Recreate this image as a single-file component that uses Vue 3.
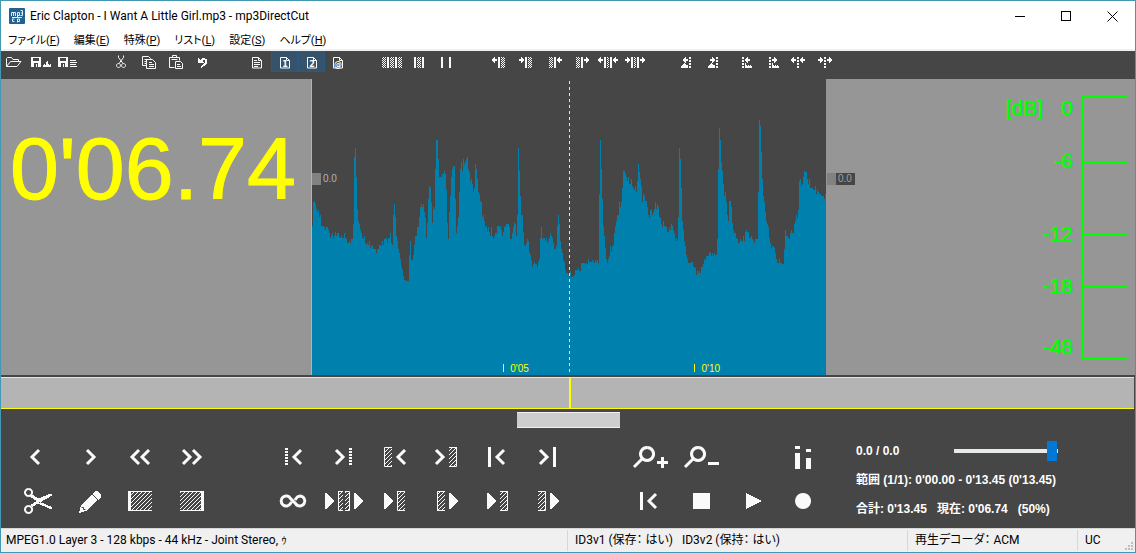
<script setup>
import { ref } from 'vue'

const menus = [
  ['ファイル', 'F'], ['編集', 'E'], ['特殊', 'P'], ['リスト', 'L'], ['設定', 'S'], ['ヘルプ', 'H'],
]

const solid = d => ({ d, kind: 'solid' })
const line = d => ({ d, kind: 'line' })
const thick = d => ({ d, kind: 'thick' })
const hatch = d => ({ d, kind: 'hatch' })

/* toolbar glyph parts, on a 27 x 21 cell */
const arrowL = x => solid(`M${x} 8h1v-1h1v-1h1v2h2v2h-2v2h-1v-1h-1v-1h-1z`)
const arrowR = x => solid(`M${x + 5} 8h-1v-1h-1v-1h-1v2h-2v2h2v2h1v-1h1v-1h1z`)
const bar = x => solid(`M${x} 6h2v11h-2z`)
const check = (x, w = 4) => ({ d: `M${x} 6h${w}v11h-${w}z`, kind: 'check' })
const dots = x => solid(`M${x} 6h2v2h-2zM${x} 9h2v2h-2zM${x} 12h2v2h-2zM${x} 15h2v2h-2z`)
const page = x => line(`M${x + 0.5} 6.5h6l3 3v7.5h-9zM${x + 6.5} 6.5v3h3`)
const disk = solid('M3 6h10v10h-3v-4h-4v4h-3zM5 7v3h6v-3zM8 13h1v3h-1z')
const hillL = solid('M5 17v-2h1v-1h1v-1h1v-1h1v1h1v1h2v3z')
const hillR = solid('M15 17v-5h1v2h1v1h1v-1h1v1h1v-1h1v1h1v2z')

const tools = [
  { name: '開く', parts: [line('M5.5 15.5v-8l1-1h4l1.5 2h5.5v2M5.5 15.5l4-5h10.5l-4 5z')] },
  { name: '選択範囲を保存', parts: [disk, solid('M15 16v-2h1v-1h1v1h1v-3h1v-1h1v3h1v1h1v-1h1v3z')] },
  { name: '分割保存', parts: [disk, line('M15 9.5h6M15 11.5h7M15 13.5h6M15 15.5h7')] },
  null,
  { name: '切り取り', parts: [line('M9.5 4.5v2l4.5 6M14.500 4.500v2l-4.5 6M9.500 12.500a2 2 0 1 0 .1 0M14.500 12.500a2 2 0 1 0 .1 0')] },
  { name: 'コピー', parts: [line('M10.500 14.500h-4v-9h6l2 2v1M8.500 8.500h3M8.500 10.500h2M8.500 12.500h2M10.500 8.500h6l3 3v6h-9zM13 11.500h3M13 13.500h5M13 15.500h5')] },
  { name: '貼り付け', parts: [line('M11.500 16.500h-5v-10h10v3M8.500 8.500h6M9.500 6v-1.500h4v1.500M12.500 10.500h5l2 2v5h-7zM14 13.500h3M14 15.500h4')] },
  { name: '元に戻す', parts: [solid('M8 6v6h7l-2.500-2c2-2 4 0 2.500 2l-4 3v2l5-3c4-4 0-9-5-6l-1 1z')] },
  null,
  { name: '一覧', parts: [page(8), line('M10 9.500h3M10 11.500h6M10 13.500h6M10 15.500h4')] },
  { name: 'タグ1', parts: [page(9)], label: '1', on: true },
  { name: 'タグ2', parts: [page(9)], label: '2', on: true },
  { name: '添付', parts: [page(8)], label: '@' },
  null,
  { name: '範囲表示', parts: [check(3), bar(8), check(11), bar(16), check(19)] },
  { name: '範囲選択', parts: [bar(8), check(11), bar(16)] },
  { name: '範囲解除', parts: [bar(8), bar(16)] },
  null,
  { name: '始点を左へ', parts: [arrowL(5), bar(11), check(14)] },
  { name: '始点を右へ', parts: [arrowR(5), bar(11), check(14)] },
  { name: '終点を左へ', parts: [check(8), bar(13), arrowL(16)] },
  { name: '終点を右へ', parts: [check(8), bar(13), arrowR(16)] },
  { name: '範囲を左へ', parts: [arrowL(3), bar(9), check(12, 2), bar(15), arrowL(18)] },
  { name: '範囲を右へ', parts: [arrowR(3), bar(9), check(12, 2), bar(15), arrowR(18)] },
  null,
  { name: '前の音の終わり', parts: [arrowL(7), hillL, dots(13)] },
  { name: '次の音の終わり', parts: [arrowR(7), hillL, dots(13)] },
  { name: '前の音の始まり', parts: [dots(12), arrowL(15), hillR] },
  { name: '次の音の始まり', parts: [dots(12), arrowR(15), hillR] },
  { name: 'カット点を左へ', parts: [arrowL(7), dots(13), arrowL(16)] },
  { name: 'カット点を右へ', parts: [arrowR(7), dots(13), arrowR(16)] },
]

/* transport glyph parts, on a 51 x 44 cell */
const prev = x => thick(`M${x + 9} 15l-7 7l7 7`)
const next = x => thick(`M${x + 1} 15l7 7l-7 7`)
const tri = x => solid(`M${x} 14v16h1l8-8l-8-8z`)
const post = (x, top = 12, h = 20) => solid(`M${x} ${top}h3v${h}h-3z`)
const dotted = x => solid([13, 16, 19, 22, 25, 28].map(y => `M${x} ${y}h3v2h-3z`).join(''))
const openR = (x, w = 8) => [hatch(`M${x} 12h${w}v20h-${w}z`), line(`M${x + w} 12.500h-${w - 0.5}v19h${w - 0.5}`)]
const openL = (x, w = 8) => [hatch(`M${x} 12h${w}v20h-${w}z`), line(`M${x} 12.500h${w - 0.5}v19h-${w - 0.5}`)]
const lens = thick('M22 12.500a6.500 6.500 0 1 0 .1 0M17 24l-8 8')

const groups = [
  [
    { name: '戻る', parts: [prev(17)] },
    { name: '進む', parts: [next(22)] },
    { name: '早戻し', parts: [prev(15), prev(25)] },
    { name: '早送り', parts: [next(16), next(26)] },
    { name: '切り取り', parts: [{ d: 'M15.500 10a3.500 3.500 0 1 0 .1 0M15.500 27a3.500 3.500 0 1 0 .1 0', kind: 'mid' }, solid('M18 15l8 4.500l11-5l2 .5v1.500l-20 11.500l-2-2l7-4l-7-4zM27 23l12 5v1.500l-2 .5l-13-6z')] },
    { name: '編集', parts: [solid('M15 34l2-8l11-10l5 5l-11 11zM29 15l2-3h2l4 4v2l-3 3z'), { d: 'M17.500 28.500h2v2h2', kind: 'cut' }] },
    { name: '範囲の始点', parts: [post(13), hatch('M16 12h21v20h-21z'), line('M16 12.500h21M16 31.500h21')] },
    { name: '範囲の終点', parts: [post(35), hatch('M14 12h21v20h-21z'), line('M14 12.500h21M14 31.500h21')] },
  ],
  [
    { name: '前のカット点', parts: [dotted(17), prev(24)] },
    { name: '次のカット点', parts: [next(16), dotted(30)] },
    { name: '始点へ', parts: [...openR(14), prev(26)] },
    { name: '終点へ', parts: [next(14), ...openL(28)] },
    { name: '先頭へ', parts: [post(16), prev(23)] },
    { name: '末尾へ', parts: [next(16), post(30)] },
    { name: 'ループ再生', parts: [thick('M32 17a5 5 0 1 1-4.500 7.500l-5-5a5 5 0 1 0 0 5l1-1.500M27 21l1-1.500a5 5 0 0 1 4-2.500')] },
    { name: 'カット再生', parts: [tri(6), ...openR(19, 5), ...openL(26, 5), tri(35)] },
    { name: '始点まで再生', parts: [tri(14), ...openR(27)] },
    { name: '始点から再生', parts: [...openR(16), tri(28)] },
    { name: '終点まで再生', parts: [tri(15), ...openL(28)] },
    { name: '終点から再生', parts: [...openL(15), tri(27)] },
  ],
  [
    { name: '拡大', parts: [lens, solid('M36 22h3v4h4v3h-4v4h-3v-4h-4v-3h4z')] },
    { name: '縮小', parts: [lens, solid('M32 27h11v3h-11z')] },
    null,
    { name: 'レベル表示', parts: [solid('M17 11h5v3h-5zM17 18h5v16h-5zM28 14h5v3h-5zM28 23h5v11h-5z')] },
    { name: '最初へ', parts: [post(15, 13, 18), prev(22)] },
    { name: '停止', parts: [solid('M17 14h17v16h-17z')] },
    { name: '再生', parts: [solid('M19 14l16 8l-16 8z')] },
    { name: '録音', parts: [{ d: 'M25 14a8 8 0 1 0 .1 0z', kind: 'round' }] },
  ],
]

/* peak levels: column, distance from the top; each holds until the next column */
const peaks = `0,147 1,123 2,122 3,125 4,130 5,133 6,131 7,138 8,136 9,147 12,148 13,151 14,148 16,151 17,154 18,159 19,157 20,154 21,160 22,157 23,153 24,157 25,154 27,159 29,157 30,159 32,154 33,159 34,160 35,164 37,162 38,164 39,160 41,145 42,78 43,69 44,98 45,130 46,142 47,145 48,151 49,154 50,159 51,160 52,157 53,164 54,166 55,164 56,166 57,162 58,169 59,167 60,166 61,170 64,174 65,170 67,166 69,167 70,162 71,166 72,160 74,159 75,164 76,159 78,154 79,164 80,166 81,136 82,125 83,138 84,157 85,162 86,170 87,174 88,180 89,188 90,191 91,197 92,201 94,202 97,176 98,162 99,181 101,176 102,166 103,157 105,148 107,138 108,128 109,125 110,128 111,125 112,133 113,139 114,159 115,144 116,120 117,107 118,109 119,123 120,144 121,128 122,130 123,90 124,61 126,80 127,98 130,95 132,92 133,95 134,111 135,144 136,160 137,133 138,117 139,98 140,90 141,87 143,120 144,154 145,147 146,138 147,113 148,90 149,83 150,92 151,80 152,85 153,83 154,80 155,78 156,90 157,93 158,102 159,100 160,105 161,113 162,109 163,85 164,90 165,100 166,113 167,115 168,122 169,123 170,138 171,136 172,142 173,148 174,147 175,153 176,148 177,153 178,157 179,148 180,157 181,160 182,157 183,154 185,147 187,148 188,147 189,151 190,157 191,153 192,148 193,147 194,145 197,148 198,160 200,154 201,148 202,144 203,145 204,157 205,136 206,69 207,92 208,117 209,136 211,153 212,166 213,167 214,164 215,160 216,162 217,173 218,176 219,181 220,188 221,185 222,183 223,185 225,188 226,183 227,180 228,159 229,148 230,160 231,159 233,162 234,159 235,164 236,162 237,159 238,154 239,157 240,159 241,164 242,170 244,167 245,147 246,136 247,145 248,162 249,170 250,174 251,181 252,183 253,191 254,194 256,196 257,198 258,192 259,198 261,197 262,196 263,191 266,189 267,192 269,184 273,185 274,184 275,185 276,180 277,183 280,181 281,183 282,184 283,181 284,183 285,181 286,184 287,115 288,61 289,90 290,120 291,147 292,157 293,169 294,180 295,184 296,180 297,177 298,167 299,173 300,167 301,166 302,154 303,147 304,142 305,136 307,123 308,128 309,123 310,109 311,92 313,95 314,98 315,102 316,98 317,105 319,100 320,107 321,109 322,111 323,107 324,113 325,102 326,85 327,93 328,100 329,107 330,123 331,115 332,117 333,122 335,128 336,136 337,139 338,131 340,136 341,133 342,130 343,123 344,130 345,125 346,128 347,138 348,139 349,145 350,148 351,142 352,147 354,148 355,153 357,148 358,151 359,145 360,147 361,151 362,154 363,162 364,159 365,162 366,138 367,69 368,80 369,109 370,142 371,151 372,162 373,167 374,176 375,180 376,184 379,183 381,188 383,189 384,196 385,192 386,194 387,192 388,194 389,188 391,185 392,180 393,181 394,177 397,173 398,174 399,177 400,174 401,177 402,174 403,176 405,160 406,90 407,49 408,61 409,83 410,92 411,105 412,117 413,113 414,123 415,136 416,142 417,122 419,128 420,144 421,151 422,154 424,159 425,160 426,164 428,160 429,162 431,157 432,162 433,153 434,151 435,153 437,159 439,157 440,160 441,162 442,164 443,160 446,113 447,41 448,47 449,73 450,100 451,117 452,123 453,133 454,142 455,145 456,148 457,159 458,164 459,169 460,167 462,169 463,174 464,180 465,184 467,180 468,184 470,185 472,170 473,151 474,157 476,159 477,160 478,154 479,151 480,154 482,145 483,142 484,136 485,139 486,131 487,102 488,100 489,107 490,105 491,98 492,92 493,93 495,100 496,105 497,100 498,109 501,111 503,107 504,115 505,111 506,113 507,115 509,117 512,120 513,115`
  .split(' ').map(p => p.split(',').map(Number))
const wavePath = 'M0 296' + peaks.map(([x, y]) => `H${x}V${y}`).join('') + 'H514V296Z'

const levels = [
  { text: '0', y: 25 }, { text: '-6', y: 78 }, { text: '-12', y: 151 },
  { text: '-18', y: 203 }, { text: '-48', y: 264 },
]
const volume = ref(99)
</script>

<template>
  <div class="window">
    <header class="titlebar">
      <svg class="logo" width="16" height="16" viewBox="0 0 16 16">
        <rect width="16" height="16" rx="1" />
        <path d="M2.500 8v-3.500h4v3.500M4.500 4.500v3.500M8.500 10v-5.500h2v3h-2M11.500 2.500h2v5h-2M12 5h2M3 9.500h10M5.500 11h-2v2.500h2M8.500 14.500v-3.500h2v2.500h-2" />
      </svg>
      <h1>Eric Clapton - I Want A Little Girl.mp3 - mp3DirectCut</h1>
      <button class="sys" aria-label="最小化"><svg width="11" height="11"><path d="M0 5.500h10" /></svg></button>
      <button class="sys" aria-label="最大化"><svg width="11" height="11"><path d="M.5 .5h9v9h-9z" /></svg></button>
      <button class="sys" aria-label="閉じる"><svg class="smooth" width="11" height="11"><path d="M.5 .5l10 10M10.500 .5l-10 10" /></svg></button>
    </header>

    <nav class="menubar">
      <button v-for="m in menus" :key="m[1]">{{ m[0] }}(<u>{{ m[1] }}</u>)</button>
    </nav>

    <div class="toolbar">
      <template v-for="(t, i) in tools" :key="i">
        <button v-if="t" class="tool" :class="{ on: t.on }" :aria-label="t.name">
          <svg width="27" height="21" viewBox="0 0 27 21">
            <path v-for="(p, k) in t.parts" :key="k" :d="p.d" :class="p.kind" />
            <text v-if="t.label" :x="t.on ? 14 : 13" y="16">{{ t.label }}</text>
          </svg>
        </button>
        <span v-else class="slot"></span>
      </template>
    </div>

    <main class="stage">
      <section class="clock">0'06.74</section>
      <section class="wave">
        <svg class="graph" viewBox="0 0 514 296" preserveAspectRatio="none"><path :d="wavePath" /></svg>
        <div class="gain"><i></i><span>0.0</span></div>
        <div class="tick five">0'05</div>
        <div class="tick ten">0'10</div>
        <div class="cursor"></div>
      </section>
      <section class="meter">
        <div class="gain boxed"><i></i><span>0.0</span></div>
        <svg class="scale" width="130" height="274" viewBox="0 0 130 274">
          <text x="43" y="25">[dB]</text>
          <text v-for="l in levels" :key="l.text" x="73" :y="l.y">{{ l.text }}</text>
          <path d="M82 6h46v264h-46zM83 7v65h44v-65zM83 73v71h44v-71zM83 145v51h44v-51zM83 197v71h44v-71z" />
        </svg>
      </section>
    </main>

    <div class="overview"><span></span></div>

    <section class="panel">
      <div class="scroll"></div>
      <div class="controls">
        <div v-for="(g, i) in groups" :key="i" class="group" :class="{ wide: i === 1 }">
          <template v-for="(b, j) in g" :key="j">
            <button v-if="b" :aria-label="b.name">
              <svg width="51" height="44" viewBox="0 0 51 44">
                <path v-for="(p, k) in b.parts" :key="k" :d="p.d" :class="p.kind" />
              </svg>
            </button>
            <span v-else></span>
          </template>
        </div>
        <div class="info">
          <div class="row">
            <label for="volume">0.0 / 0.0</label>
            <input id="volume" v-model="volume" type="range" min="0" max="100">
          </div>
          <div class="row">範囲 (1/1): 0'00.00 - 0'13.45 (0'13.45)</div>
          <div class="row">合計: 0'13.45&nbsp;&nbsp; 現在: 0'06.74&nbsp;&nbsp; (50%)</div>
        </div>
      </div>
    </section>

    <footer class="status">
      <span>MPEG1.0 Layer 3 - 128 kbps - 44 kHz - Joint Stereo, ｩ</span>
      <span>ID3v1 (保存： はい)&nbsp;&nbsp; ID3v2 (保持： はい)</span>
      <span>再生デコーダ： ACM</span>
      <span>UC</span>
      <svg class="grip" width="9" height="9"><path d="M6 0h2v2h-2zM3 3h2v2h-2zM6 3h2v2h-2zM0 6h2v2h-2zM3 6h2v2h-2zM6 6h2v2h-2z" /></svg>
    </footer>

    <svg class="defs" width="0" height="0" aria-hidden="true">
      <defs>
        <pattern id="checks" width="2" height="2" patternUnits="userSpaceOnUse">
          <path d="M0 0h1v1h-1zM1 1h1v1h-1z" fill="#fafafa" />
        </pattern>
        <pattern id="hatching" width="4" height="4" patternUnits="userSpaceOnUse">
          <path d="M-1 1l2-2M0 4l4-4M3 5l2-2" stroke="#fafafa" stroke-width="1" />
        </pattern>
      </defs>
    </svg>
  </div>
</template>

<style>
body {
  margin: 0;
}
</style>

<style scoped>
.window {
  box-sizing: border-box;
  min-height: 100vh;
  display: flex;
  flex-direction: column;
  border: 1px solid #4399b3;
  background: #464646;
  color: #000;
  font: 12px/18px Roboto, "Noto Sans CJK JP", sans-serif;
  font-feature-settings: "palt";
  white-space: nowrap;
}
button {
  margin: 0;
  padding: 0;
  border: 0;
  background: none;
  color: inherit;
  font: inherit;
  font-feature-settings: inherit;
}
svg {
  display: block;
}
.defs {
  position: absolute;
}
.titlebar {
  display: flex;
  align-items: center;
  height: 30px;
  padding-left: 8px;
  background: #fff;
}
.logo rect {
  fill: #24608f;
}
.logo path {
  fill: none;
  stroke: #dcecf5;
  stroke-width: 1;
}
h1 {
  flex: 1;
  margin: 0 0 0 5px;
  font-size: 12px;
  font-weight: 400;
}
.sys {
  width: 46px;
  height: 30px;
  display: grid;
  place-items: center;
}
.sys path {
  fill: none;
  stroke: #000;
  shape-rendering: crispEdges;
}
.sys .smooth path {
  shape-rendering: auto;
}
.menubar {
  display: flex;
  gap: 14px;
  height: 18px;
  padding-left: 7px;
  border-bottom: 2px solid #f0f0f0;
  background: #fff;
  font-size: 11px;
  line-height: 20px;
}
.toolbar {
  display: flex;
  height: 28px;
}
.tool,
.slot {
  width: 27px;
  height: 21px;
}
.tool.on {
  box-shadow: inset 0 0 0 1px #265a88;
  background: #36536b;
}
.tool text {
  fill: #fafafa;
  font: bold 8px "DejaVu Sans", sans-serif;
  text-anchor: middle;
}
.solid {
  fill: #fafafa;
  fill-rule: evenodd;
  shape-rendering: crispEdges;
}
.round {
  fill: #fafafa;
}
.line,
.thick,
.mid,
.cut {
  fill: none;
  stroke: #fafafa;
  stroke-width: 1;
}
.thick {
  stroke-width: 3;
}
.mid {
  stroke-width: 2;
}
.cut {
  stroke: #464646;
}
.check {
  fill: url(#checks);
  shape-rendering: crispEdges;
}
.hatch {
  fill: url(#hatching);
}
.stage {
  flex: 1;
  display: grid;
  grid-template-columns: minmax(0, 310fr) minmax(0, 515fr) minmax(0, 309fr);
  min-height: 296px;
  border-bottom: 2px solid #464646;
  background: #969696;
}
.clock {
  padding: 40px 0 0 9px;
  color: #ff0;
  font: 88px/100px "Liberation Sans", Arial, sans-serif;
  -webkit-text-stroke: 1px #ff0;
}
.wave {
  position: relative;
  border-left: 1px solid #b4b4b4;
  background: #464646;
}
.graph {
  position: absolute;
  width: 100%;
  height: 100%;
}
.graph path {
  fill: #0080ac;
  shape-rendering: crispEdges;
}
.gain {
  position: absolute;
  top: 94px;
  left: 0;
  display: flex;
  color: #b4b4b4;
  font: 10px/12px "Liberation Sans", Arial, sans-serif;
}
.gain i {
  width: 9px;
  height: 12px;
  background: #828282;
}
.gain span {
  padding: 0 3px 0 2px;
}
.gain.boxed {
  left: 1px;
}
.gain.boxed span {
  background: #464646;
  color: #a0a0a0;
}
.tick {
  position: absolute;
  bottom: 3px;
  height: 8px;
  padding-left: 6px;
  border-left: 1px solid #ff0;
  color: #ff0;
  font: 10px/9px "Liberation Sans", Arial, sans-serif;
}
.five {
  left: 37.2%;
}
.ten {
  left: 74.4%;
}
.cursor {
  position: absolute;
  top: 2px;
  bottom: 3px;
  left: 50%;
  width: 1px;
  background: repeating-linear-gradient(#ff0 0 3px, transparent 3px 6px);
}
.meter {
  position: relative;
  display: flex;
  justify-content: flex-end;
  padding: 11px 5px 0 0;
}
.scale text {
  fill: #0f0;
  stroke: #0f0;
  stroke-width: 0.5;
  font: 21px "Liberation Sans", Arial, sans-serif;
  text-anchor: end;
}
.scale path {
  fill: #0f0;
  fill-rule: evenodd;
  shape-rendering: crispEdges;
}
.overview {
  height: 30px;
  display: flex;
  justify-content: center;
  margin-right: 1px;
  border: solid #ff0;
  border-width: 1px 0;
  background: #b4b4b4;
}
.overview span {
  width: 2px;
  margin-left: 4px;
  background: #ff0;
}
.panel {
  padding: 3px 0 5px;
}
.scroll {
  box-sizing: border-box;
  width: 103px;
  height: 16px;
  margin: 0 auto 7px;
  border: solid #f0f0f0;
  border-width: 1px 0;
  background: #cdcdcd;
}
.controls {
  display: flex;
  gap: 51px;
  padding-left: 12px;
}
.group {
  display: grid;
  grid-template-columns: repeat(4, 51px);
  grid-auto-rows: 44px;
}
.group.wide {
  grid-template-columns: repeat(6, 51px);
}
.info {
  flex: 1;
  margin-left: -24px;
  padding-top: 1px;
  color: #fff;
  font: bold 12px/30px "Liberation Sans", "Noto Sans CJK JP", sans-serif;
  font-feature-settings: normal;
}
.row {
  display: flex;
  align-items: center;
  height: 29px;
}
#volume {
  width: 104px;
  height: 20px;
  margin: 0 0 0 55px;
  appearance: none;
  background: linear-gradient(#e7eaea, #e7eaea) center / 100% 4px no-repeat;
}
#volume::-webkit-slider-thumb {
  appearance: none;
  width: 10px;
  height: 20px;
  background: #0078d7;
}
.status {
  position: relative;
  box-sizing: border-box;
  display: grid;
  grid-template-columns: minmax(0, 566fr) minmax(0, 340fr) minmax(0, 170fr) minmax(0, 58fr);
  height: 24px;
  padding: 1px 0;
  border-top: 1px solid #d7d7d7;
  background: #f0f0f0;
  line-height: 21px;
}
.status span {
  padding-left: 7px;
  border-left: 1px solid #d7d7d7;
}
.status span:first-child {
  padding-left: 5px;
  border-left: 0;
}
.grip {
  position: absolute;
  right: 1px;
  bottom: 1px;
  fill: #bfbfbf;
}
</style>
